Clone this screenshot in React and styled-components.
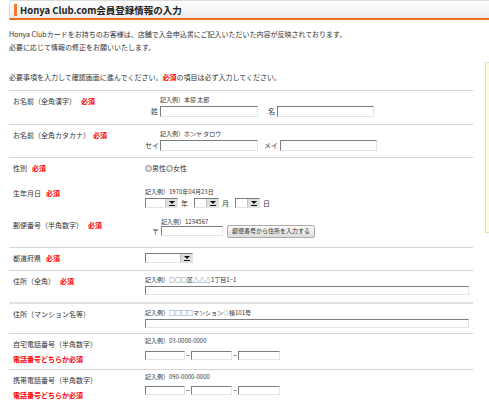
import styled, { createGlobalStyle } from "styled-components"

const Global = createGlobalStyle`
    html, body {
        margin: 0;
        padding: 0;
        overflow: hidden;
        background: #fff;
    }
    body {
        font-family: "Noto Sans CJK JP", "Noto Sans", sans-serif;
        color: #333;
        font-size: 7px;
    }
`

const Page = styled.div`
    width: 800px;
    padding-left: 9px;
`

const Header = styled.div`
    display: flex;
    align-items: center;
    background: linear-gradient(#ffffff, #ebebeb);
    border-top: 1px solid #dcdcdc;
    border-left: 1px solid #dcdcdc;
    border-bottom: 2px solid #ea6a1f;
    border-radius: 3px 0 0 0;
    box-sizing: border-box;
    height: 20px;
`

const Accent = styled.span`
    width: 3px;
    height: 12px;
    margin-left: 4px;
    background: #f07b2e;
`

const Title = styled.h1`
    margin: 0 0 0 3px;
    font-size: 9.5px;
    font-weight: bold;
    color: #222;
    line-height: 12px;
`

const Columns = styled.div`
    display: flex;
    align-items: flex-start;
`

const Main = styled.div`
    width: 464px;
`

const Side = styled.div`
    width: 200px;
    height: 171px;
    margin: 42px 0 0 12px;
    background: #fffbe3;
    border: 1px solid #e2dcbc;
    box-sizing: border-box;
`

const Intro = styled.p`
    margin: 8px 0 0;
    line-height: 13px;
`

const Notice = styled.p`
    margin: 17px 0 0;
    line-height: 13px;
`

const Req = styled.span`
    color: #f00;
    font-weight: bold;
    margin-left: ${props => props.$gap || 0}px;
`

const Table = styled.div`
    margin-top: 6px;
`

const Row = styled.div`
    display: grid;
    grid-template-columns: 136px 1fr;
    align-items: start;
    height: ${props => props.$h}px;
    box-sizing: border-box;
    border-top: ${props => props.$line ? `${props.$line}px solid ${props.$line > 1 ? "#e2e2e2" : "#d4d4d4"}` : "none"};
    padding-top: 5px;
`

const Label = styled.div`
    padding-left: 4px;
    line-height: 10px;
`

const Note = styled.div`
    margin-top: 5px;
    color: #f00;
    font-weight: bold;
`

const Value = styled.div`
    display: flex;
    flex-direction: column;
    align-items: flex-start;
    gap: ${props => props.$gap ?? 2}px;
    margin-top: ${props => props.$top || 0}px;
`

const Example = styled.div`
    font-size: 6px;
    line-height: 8px;
    margin-left: ${props => props.$indent || 0}px;
    color: #333;
`

const Line = styled.div`
    display: flex;
    align-items: center;
    height: 10px;
    line-height: 10px;
`

const FieldLabel = styled.span`
    width: ${props => props.$w}px;
    text-align: right;
    padding-right: 2px;
    box-sizing: border-box;
    white-space: nowrap;
`

const Input = styled.span`
    display: block;
    flex: none;
    width: ${props => props.$w}px;
    height: ${props => props.$h || 10}px;
    box-sizing: border-box;
    background: #fff;
    border: 1px solid;
    border-color: #7d7d7d #e4e4e4 #e4e4e4 #7d7d7d;
`

const Select = styled.span`
    display: flex;
    justify-content: flex-end;
    width: ${props => props.$w}px;
    height: 10px;
    box-sizing: border-box;
    background: #fff;
    border: 1px solid;
    border-color: #7d7d7d #e4e4e4 #e4e4e4 #7d7d7d;
`

const Arrow = styled.span`
    width: 11px;
    height: 100%;
    background: #dedede;
    border-left: 1px solid #c4c4c4;
    display: flex;
    flex-direction: column;
    align-items: center;
    justify-content: center;
    gap: 1px;

    &::before {
        content: "";
        border-left: 3px solid transparent;
        border-right: 3px solid transparent;
        border-top: 3px solid #111;
    }
    &::after {
        content: "";
        width: 6px;
        height: 1px;
        background: #111;
    }
`

const Unit = styled.span`
    margin: 0 6px 0 3px;
`

const Dash = styled.span`
    width: 6px;
    text-align: center;
`

const Radio = styled.span`
    width: 7px;
    height: 7px;
    border-radius: 50%;
    box-sizing: border-box;
    border: 1px solid #8a8a8a;
    background: radial-gradient(circle, #f0f0f0, #cfcfcf);
`

const Button = styled.span`
    display: flex;
    align-items: center;
    justify-content: center;
    width: 88px;
    height: 13px;
    margin-left: 4px;
    box-sizing: border-box;
    font-size: 6px;
    background: linear-gradient(#fafafa, #dcdcdc);
    border: 1px solid #ababab;
    border-radius: 2px;
`

function DateSelects() {
    return (
        <Line>
            <Select $w={33}><Arrow /></Select>
            <Unit>年</Unit>
            <Select $w={25}><Arrow /></Select>
            <Unit>月</Unit>
            <Select $w={25}><Arrow /></Select>
            <Unit>日</Unit>
        </Line>
    )
}

function Phone() {
    return (
        <Line>
            <Input $w={40} $h={9} />
            <Dash>−</Dash>
            <Input $w={41} $h={9} />
            <Dash>−</Dash>
            <Input $w={42} $h={9} />
        </Line>
    )
}

export default function App() {
    return (
        <>
            <Global />
            <Page>
                <Header>
                    <Accent />
                    <Title>Honya Club.com会員登録情報の入力</Title>
                </Header>
                <Columns>
                    <Main>
                        <Intro>
                            Honya Clubカードをお持ちのお客様は、店舗で入会申込書にご記入いただいた内容が反映されております。<br />
                            必要に応じて情報の修正をお願いいたします。
                        </Intro>
                        <Notice>
                            必要事項を入力して確認画面に進んでください。<Req>必須</Req>の項目は必ず入力してください。
                        </Notice>
                        <Table>
                            <Row $h={34} $line={1}>
                                <Label>お名前（全角漢字）<Req $gap={5}>必須</Req></Label>
                                <Value>
                                    <Example $indent={15}>記入例）本屋 太郎</Example>
                                    <Line>
                                        <FieldLabel $w={15}>姓</FieldLabel>
                                        <Input $w={98} $h={11} />
                                        <FieldLabel $w={19}>名</FieldLabel>
                                        <Input $w={97} $h={11} />
                                    </Line>
                                </Value>
                            </Row>
                            <Row $h={33} $line={1}>
                                <Label>お名前（全角カタカナ）<Req $gap={3}>必須</Req></Label>
                                <Value>
                                    <Example $indent={15}>記入例）ホンヤ タロウ</Example>
                                    <Line>
                                        <FieldLabel $w={15}>セイ</FieldLabel>
                                        <Input $w={98} $h={11} />
                                        <FieldLabel $w={22}>メイ</FieldLabel>
                                        <Input $w={97} $h={11} />
                                    </Line>
                                </Value>
                            </Row>
                            <Row $h={26} $line={1}>
                                <Label>性別<Req $gap={5}>必須</Req></Label>
                                <Line>
                                    <Radio />男性<Radio />女性
                                </Line>
                            </Row>
                            <Row $h={32}>
                                <Label>生年月日<Req $gap={5}>必須</Req></Label>
                                <Value>
                                    <Example>記入例）1970年04月23日</Example>
                                    <DateSelects />
                                </Value>
                            </Row>
                            <Row $h={32}>
                                <Label>郵便番号（半角数字）<Req $gap={5}>必須</Req></Label>
                                <Value $top={-2} $gap={0}>
                                    <Example $indent={16}>記入例）1234567</Example>
                                    <Line>
                                        <FieldLabel $w={16}>〒</FieldLabel>
                                        <Input $w={62} />
                                        <Button>郵便番号から住所を入力する</Button>
                                    </Line>
                                </Value>
                            </Row>
                            <Row $h={23} $line={1}>
                                <Label>都道府県<Req $gap={5}>必須</Req></Label>
                                <Value>
                                    <Select $w={48}><Arrow /></Select>
                                </Value>
                            </Row>
                            <Row $h={32} $line={1}>
                                <Label>住所（全角）<Req $gap={5}>必須</Req></Label>
                                <Value>
                                    <Example>記入例）○○○区△△△1丁目1−1</Example>
                                    <Input $w={324} $h={9} />
                                </Value>
                            </Row>
                            <Row $h={31} $line={2}>
                                <Label>住所（マンション名等）</Label>
                                <Value>
                                    <Example>記入例）□□□□マンション◇棟101号</Example>
                                    <Input $w={324} $h={9} />
                                </Value>
                            </Row>
                            <Row $h={36} $line={1}>
                                <Label>
                                    自宅電話番号（半角数字）
                                    <Note>電話番号どちらか必須</Note>
                                </Label>
                                <Value $top={-2} $gap={5}>
                                    <Example>記入例）03-0000-0000</Example>
                                    <Phone />
                                </Value>
                            </Row>
                            <Row $h={40} $line={1}>
                                <Label>
                                    携帯電話番号（半角数字）
                                    <Note>電話番号どちらか必須</Note>
                                </Label>
                                <Value $top={-2} $gap={4}>
                                    <Example>記入例）090-0000-0000</Example>
                                    <Phone />
                                </Value>
                            </Row>
                        </Table>
                    </Main>
                    <Side />
                </Columns>
            </Page>
        </>
    )
}
